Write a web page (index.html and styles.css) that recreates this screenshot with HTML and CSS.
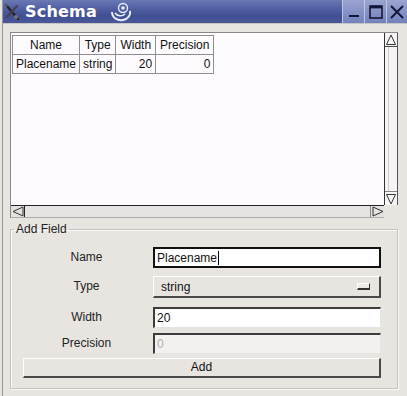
FILE: index.html
```html
<!DOCTYPE html>
<html>
<head>
<meta charset="utf-8">
<link rel="stylesheet" href="styles.css">
</head>
<body>
<div class="window">
  <div class="titlebar">
    <svg class="appicon" width="20" height="20" viewBox="0 0 20 20">
      <path d="M4 3 L16 17" stroke="#222" stroke-width="2.2" stroke-linecap="round"/>
      <path d="M15 4 L5 15" stroke="#444" stroke-width="2" stroke-linecap="round"/>
      <path d="M3 2 L6 3 L4 6 Z" fill="#666"/>
      <circle cx="14" cy="15" r="2" fill="#777"/>
    </svg>
    <span class="title">Schema</span>
    <svg class="swirl" width="24" height="22" viewBox="0 0 24 22">
      <path d="M3 11 C3 17 9 20 14 19 C19 18 22 14 21 10" stroke="#e8ecf8" stroke-width="2" fill="none"/>
      <path d="M6 12 C8 15 13 16 16 13" stroke="#e8ecf8" stroke-width="1.6" fill="none"/>
      <circle cx="14" cy="7" r="4.5" stroke="#e8ecf8" stroke-width="1.4" fill="none"/>
      <circle cx="14" cy="7" r="1.8" fill="#e8ecf8"/>
    </svg>
    <div class="spacer"></div>
    <div class="tbtn"><svg width="14" height="14" viewBox="0 0 14 14"><rect x="2" y="10" width="10" height="2" fill="#141838"/></svg></div>
    <div class="tbtn"><svg width="16" height="16" viewBox="0 0 16 16"><rect x="2" y="2" width="12" height="12" fill="none" stroke="#141838" stroke-width="1.6"/><rect x="2" y="2" width="12" height="2.4" fill="#141838"/></svg></div>
    <div class="tbtn last"><svg width="16" height="16" viewBox="0 0 16 16"><path d="M2 2 L14 14 M14 2 L2 14" stroke="#141838" stroke-width="2"/></svg></div>
  </div>
  <div class="content">
    <div class="scrollframe">
      <div class="view">
        <table class="grid">
          <tr><th>Name</th><th>Type</th><th>Width</th><th>Precision</th></tr>
          <tr><td>Placename</td><td>string</td><td class="num">20</td><td class="num">0</td></tr>
        </table>
      </div>
      <div class="vbar">
        <div class="arrow"><svg width="12" height="12" viewBox="0 0 12 12"><path d="M6 1 L10.5 10.5 L1.5 10.5 Z" fill="none" stroke="#333" stroke-width="1"/></svg></div>
        <div class="trough"></div>
        <div class="arrow"><svg width="12" height="12" viewBox="0 0 12 12"><path d="M1.5 1.5 L10.5 1.5 L6 11 Z" fill="none" stroke="#333" stroke-width="1"/></svg></div>
      </div>
      <div class="hbar">
        <div class="harrow"><svg width="12" height="11" viewBox="0 0 12 11"><path d="M1 5.5 L11 1 L11 10 Z" fill="none" stroke="#333" stroke-width="1"/></svg></div>
        <div class="htrough"></div>
        <div class="harrow"><svg width="12" height="11" viewBox="0 0 12 11"><path d="M11 5.5 L1 1 L1 10 Z" fill="none" stroke="#333" stroke-width="1"/></svg></div>
      </div>
      <div class="corner"></div>
    </div>
    <fieldset class="group">
      <legend>Add Field</legend>
      <div class="form">
        <label>Name</label>
        <div class="input focused">Placename<span class="caret"></span></div>
        <label>Type</label>
        <div class="combo"><span>string</span><span class="ind"></span></div>
        <label>Width</label>
        <div class="input">20</div>
        <label>Precision</label>
        <div class="input disabled">0</div>
        <div class="button">Add</div>
      </div>
    </fieldset>
  </div>
</div>
</body>
</html>
```

FILE: styles.css
```css
html, body {
  margin: 0;
  padding: 0;
  background: #e8e5e1;
}
body {
  font-family: "Liberation Sans", Arial, sans-serif;
  font-size: 12px;
  color: #111;
}
.window {
  height: 396px;
  box-sizing: border-box;
  border-left: 1px solid #9a9894;
  margin-left: 2px;
  width: 405px;
  background: #e8e5e1;
  overflow: hidden;
}
.titlebar {
  height: 23px;
  display: flex;
  align-items: center;
  margin-left: -3px;
  background: linear-gradient(to bottom, #6a78b4 0%, #5261a4 35%, #404f92 70%, #4a589a 100%);
  border-bottom: 1px solid #c8c6c2;
}
.appicon {
  margin-left: 2px;
  flex: none;
}
.title {
  font-family: "DejaVu Sans", Verdana, sans-serif;
  font-weight: bold;
  font-size: 16px;
  color: #fff;
  margin-left: 3px;
  letter-spacing: 0.2px;
}
.swirl {
  margin-left: 12px;
  flex: none;
}
.spacer { flex: 1; }
.tbtn {
  width: 21px;
  height: 23px;
  display: flex;
  align-items: center;
  justify-content: center;
  border-left: 1px solid #c0c6e0;
  background: linear-gradient(to bottom, #9aa4d0, #7482bc);
}
.tbtn.last { width: 20px; }
.content {
  padding: 8px 6px 0 7px;
}
.scrollframe {
  width: 388px;
  height: 186px;
  display: grid;
  grid-template-columns: 1fr 14px;
  grid-template-rows: 1fr 13px;
  box-sizing: border-box;
  border-top: 1px solid #8a8884;
  border-left: 1px solid #8a8884;
}
.view {
  background: #fdfbfd;
  padding: 2px 0 0 1px;
}
.grid {
  border-collapse: collapse;
  font-size: 12px;
}
.grid th, .grid td {
  border: 1px solid #8e8e8e;
  padding: 0 4px;
  height: 18px;
  font-weight: normal;
  text-align: center;
  white-space: nowrap;
}
.grid td { text-align: left; padding: 0 3px; }
.grid td.num { text-align: right; }
.vbar {
  display: flex;
  flex-direction: column;
  background: #f6f4f6;
  border-left: 1px solid #333;
  border-right: 1px solid #555;
  box-sizing: border-box;
}
.arrow {
  height: 13px;
  display: flex;
  align-items: center;
  justify-content: center;
  border-bottom: 1px solid #444;
}
.arrow:last-child { border-bottom: none; border-top: 1px solid #888; }
.trough { flex: 1; border-left: 1px solid #cfcdcf; margin-left: 3px; }
.hbar {
  display: flex;
  background: #e4e2e0;
  border-top: 1px solid #222;
  border-bottom: 1px solid #aaa;
}
.harrow {
  width: 13px;
  display: flex;
  align-items: center;
  justify-content: center;
}
.htrough {
  flex: 1;
  border-left: 1px solid #222;
  border-right: 1px solid #888;
  background: #e6e4e2;
}
.corner { background: #e8e5e1; }
.group {
  margin: 4px 0 0 0;
  width: 388px;
  height: 167px;
  box-sizing: border-box;
  padding: 11px 0 0 0;
  border: 1px solid #c4c2be;
  box-shadow: inset 1px 1px 0 #fafafa, 1px 1px 0 #fafafa;
}
legend {
  padding: 0 2px;
  margin-left: 3px;
  font-size: 12px;
  color: #222;
}
.form {
  display: grid;
  grid-template-columns: 127px 228px;
  grid-template-rows: 29px 31px 26px 25px 20px;
  column-gap: 3px;
  padding-left: 12px;
  align-items: start;
}
.form label {
  text-align: center;
  line-height: 21px;
  color: #222;
}
.input {
  height: 21px;
  box-sizing: border-box;
  background: #fff;
  border-top: 2px solid #3c3c3c;
  border-left: 2px solid #3c3c3c;
  border-right: 1px solid #e4e4e4;
  border-bottom: 1px solid #e4e4e4;
  padding-left: 2px;
  line-height: 18px;
  display: flex;
  align-items: center;
}
.input.focused {
  border: 2px solid #111;
}
.caret {
  width: 1px;
  height: 14px;
  background: #000;
  margin-left: 1px;
}
.input.disabled {
  background: #f2f1ef;
  color: #b0b0b0;
}
.combo {
  height: 22px;
  box-sizing: border-box;
  background: #e8e5e1;
  border-top: 1px solid #fff;
  border-left: 1px solid #fff;
  border-right: 2px solid #4a4a4a;
  border-bottom: 2px solid #4a4a4a;
  display: flex;
  align-items: center;
  justify-content: space-between;
  padding: 0 9px 0 7px;
}
.ind {
  width: 11px;
  height: 4px;
  background: #ecebe9;
  border-top: 1px solid #fff;
  border-left: 1px solid #fff;
  border-right: 1px solid #333;
  border-bottom: 2px solid #333;
}
.button {
  grid-column: 1 / 3;
  height: 20px;
  box-sizing: border-box;
  background: #e8e5e1;
  border-top: 1px solid #fff;
  border-left: 1px solid #fff;
  border-right: 2px solid #4a4a4a;
  border-bottom: 2px solid #4a4a4a;
  text-align: center;
  line-height: 17px;
}
```
